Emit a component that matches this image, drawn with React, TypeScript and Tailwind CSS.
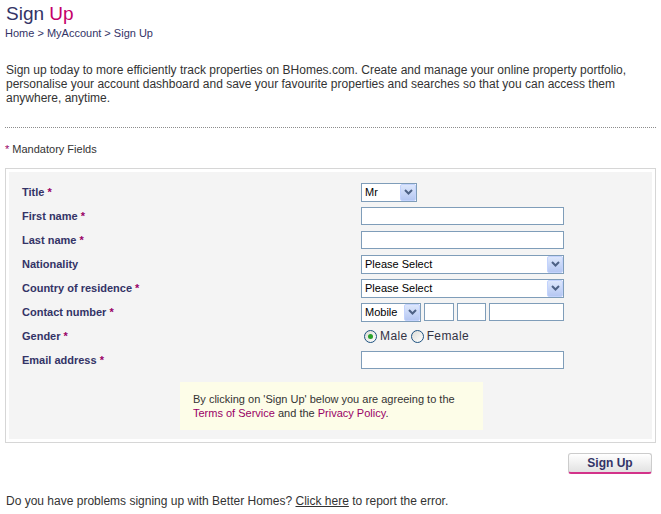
import { useState } from "react";

interface Row {
  label: string;
  required: boolean;
  kind: "title" | "text" | "select" | "contact" | "gender";
}

const rows: Row[] = [
  { label: "Title", required: true, kind: "title" },
  { label: "First name", required: true, kind: "text" },
  { label: "Last name", required: true, kind: "text" },
  { label: "Nationality", required: false, kind: "select" },
  { label: "Country of residence", required: true, kind: "select" },
  { label: "Contact number", required: true, kind: "contact" },
  { label: "Gender", required: true, kind: "gender" },
  { label: "Email address", required: true, kind: "text" },
];

function Arrow() {
  return (
    <span className="pointer-events-none absolute right-[1px] top-[1px] flex h-[17px] w-[16px] items-center justify-center rounded-[2px] border border-[#c3d3fd] bg-linear-to-b from-[#dde7fc] to-[#b5c7f2]">
      <svg width="9" height="6" viewBox="0 0 9 6">
        <path d="M1 1 L4.5 4.5 L8 1" fill="none" stroke="#4d6185" strokeWidth="2" />
      </svg>
    </span>
  );
}

function Select({ value, options, className }: { value: string; options: string[]; className: string }) {
  return (
    <div className={`relative h-[19px] ${className}`}>
      <select
        defaultValue={value}
        className="block h-[19px] w-full appearance-none border border-[#7f9db9] bg-white py-0 pl-[3px] pr-[18px] text-[11px] leading-[17px] text-black outline-none"
      >
        {options.map((o) => (
          <option key={o}>{o}</option>
        ))}
      </select>
      <Arrow />
    </div>
  );
}

function Input({ className }: { className: string }) {
  return <input type="text" className={`h-[18px] border border-[#7f9db9] bg-white px-[2px] text-[11px] outline-none ${className}`} />;
}

function Radio({ checked, onClick }: { checked: boolean; onClick: () => void }) {
  return (
    <button
      onClick={onClick}
      className="flex h-[13px] w-[13px] items-center justify-center rounded-full border border-[#1c5180] bg-linear-to-br from-[#dcdcd6] to-white"
    >
      {checked && <span className="h-[5px] w-[5px] rounded-full bg-[#2aa12a]" />}
    </button>
  );
}

export default function App() {
  const [gender, setGender] = useState("male");

  function control(row: Row) {
    if (row.kind === "title") return <Select value="Mr" options={["Mr", "Mrs", "Ms", "Dr"]} className="w-[56px]" />;
    if (row.kind === "text") return <Input className="w-[203px]" />;
    if (row.kind === "select") return <Select value="Please Select" options={["Please Select"]} className="w-[203px]" />;
    if (row.kind === "contact")
      return (
        <div className="flex gap-[3px]">
          <Select value="Mobile" options={["Mobile", "Home", "Office"]} className="w-[60px]" />
          <Input className="w-[30px]" />
          <Input className="w-[29px]" />
          <Input className="w-[75px]" />
        </div>
      );
    return (
      <div className="ml-[3px] flex items-center text-[12px] tracking-[0.4px] text-[#333344]">
        <Radio checked={gender === "male"} onClick={() => setGender("male")} />
        <span className="ml-[3px] mr-[3px]">Male</span>
        <Radio checked={gender === "female"} onClick={() => setGender("female")} />
        <span className="ml-[3px]">Female</span>
      </div>
    );
  }

  return (
    <div className="flex min-h-[514px] flex-col bg-white px-[5px] font-['Liberation_Sans',Arial,sans-serif] text-[#333333]">
      <h1 className="mt-[2px] pl-[1px] text-[19px] leading-[24px] text-[#333366]">
        Sign <span className="text-[#c4006a]">Up</span>
      </h1>
      <p className="text-[11px] leading-[14px] text-[#333366]">
        <a href="#">Home</a> &gt; <a href="#">MyAccount</a> &gt; Sign Up
      </p>

      <p className="mt-[23px] pl-[1px] text-[12px] leading-[14px]">
        Sign up today to more efficiently track properties on BHomes.com. Create and manage your online property portfolio,
        personalise your account dashboard and save your favourite properties and searches so that you can access them
        anywhere, anytime.
      </p>

      <div className="mt-[22px] border-t border-dotted border-[#8c8c8c]" />

      <p className="mt-[14px] text-[11px] leading-[14px]">
        <span className="text-[#990066]">*</span> Mandatory Fields
      </p>

      <div className="mt-[12px] border border-[#d6d6d6] p-[3px]">
        <div className="flex flex-col bg-[#f4f4f4] pb-[9px] pl-[13px] pt-[8px]">
          {rows.map((row) => (
            <div key={row.label} className="flex h-[24px] items-center">
              <label className="w-[339px] text-[11px] font-bold text-[#333366]">
                {row.label}
                {row.required && <span className="text-[#990066]"> *</span>}
              </label>
              {control(row)}
            </div>
          ))}
          <div className="mt-[10px] ml-[158px] w-[303px] bg-[#fdfde8] px-[13px] py-[10px] text-[11px] leading-[14px]">
            By clicking on 'Sign Up' below you are agreeing to the
            <br />
            <a href="#" className="text-[#990066]">Terms of Service</a> and the{" "}
            <a href="#" className="text-[#990066]">Privacy Policy</a>.
          </div>
        </div>
      </div>

      <button className="mr-[4px] mt-[10px] h-[21px] w-[84px] self-end rounded-[3px] border border-[#cccccc] border-b-2 border-b-[#d3338a] bg-linear-to-b from-white to-[#e2e2e2] text-[12px] font-bold text-[#333366]">
        Sign Up
      </button>

      <p className="mt-[20px] pl-[1px] text-[12px] leading-[14px]">
        Do you have problems signing up with Better Homes? <a href="#" className="underline">Click here</a> to report the error.
      </p>
    </div>
  );
}
